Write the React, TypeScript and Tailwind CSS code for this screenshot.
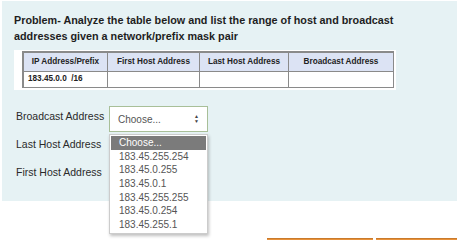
import React from "react";

const font = { fontFamily: '"Liberation Sans", Arial, sans-serif' };

export default function App() {
  const options = [
    "183.45.255.254",
    "183.45.0.255",
    "183.45.0.1",
    "183.45.255.255",
    "183.45.0.254",
    "183.45.255.1",
  ];
  return (
    <div className="relative w-[458px] h-[240px] bg-white overflow-hidden" style={font}>
      <div className="ml-[2px] mt-[1px] w-[455px] h-[200px] bg-[#e6f2f4] pl-[12px] pt-[11px]">
        <div className="text-[10.8px] font-bold leading-[16px] text-[#1e1e1e] whitespace-nowrap">
          Problem- Analyze the table below and list the range of host and broadcast
          <br />
          addresses given a network/prefix mask pair
        </div>
        <div className="mt-[6px] w-[382px] h-[40px] bg-white pl-[8px] pt-[1px]">
          <div className="w-[372px] border border-[#8a8a8a] border-l-2 border-t-2">
            <div className="flex h-[19px] bg-[#dce3f4] border-b border-[#8a8a8a] text-[8.2px] font-bold text-[#222]">
              <div className="w-[84px] border-r border-[#8a8a8a] flex items-center justify-center">IP Address/Prefix</div>
              <div className="w-[92px] border-r border-[#8a8a8a] flex items-center justify-center">First Host Address</div>
              <div className="w-[89px] border-r border-[#8a8a8a] flex items-center justify-center">Last Host Address</div>
              <div className="flex-1 flex items-center justify-center">Broadcast Address</div>
            </div>
            <div className="flex h-[15px] text-[8.2px] font-bold text-[#222]">
              <div className="w-[84px] border-r border-[#8a8a8a] flex items-center pl-[4px] whitespace-pre">183.45.0.0  /16</div>
              <div className="w-[92px] border-r border-[#8a8a8a]"></div>
              <div className="w-[89px] border-r border-[#8a8a8a]"></div>
              <div className="flex-1"></div>
            </div>
          </div>
        </div>
        <div className="mt-[16px] flex flex-col text-[10.5px] leading-[12px] text-[#2a2a2a] whitespace-nowrap">
          <div className="flex items-start h-[28px]">
            <div className="w-[95px] pt-[4px] pl-[2px]">Broadcast Address</div>
            <div className="w-[99px] h-[26px] border border-[#a8bf98] bg-white flex items-center justify-between pl-[8px] pr-[8px] text-[10px] text-[#555]">
              <span className="pt-[2px]">Choose...</span>
              <span className="flex flex-col items-center text-[#444]">
                <span className="text-[5px] leading-[5px]">▲</span>
                <span className="text-[5px] leading-[5px]">▼</span>
              </span>
            </div>
          </div>
          <div className="h-[28px] pt-[4px] pl-[2px]">Last Host Address</div>
          <div className="h-[28px] pt-[4px] pl-[2px]">First Host Address</div>
        </div>
      </div>
      <div className="absolute left-[109px] top-[134px] w-[99px] bg-white border border-[#cccccc] shadow-[1px_2px_3px_rgba(0,0,0,0.25)] text-[10px] text-[#555] leading-[13.7px] pb-[1px]">
        <div className="bg-[#7b7b7b] text-white pl-[8px] h-[13.7px] mx-[1px] mt-[1px]">Choose...</div>
        {options.map((o) => (
          <div key={o} className="pl-[9px] h-[13.7px]">{o}</div>
        ))}
      </div>
      <div className="absolute left-[267px] top-[238px] w-[106px] h-[4px] bg-[#e8913a] border-t border-[#c97a2c]" />
      <div className="absolute left-[376px] top-[238px] w-[81px] h-[4px] bg-[#e8913a] border-t border-[#c97a2c]" />
    </div>
  );
}
